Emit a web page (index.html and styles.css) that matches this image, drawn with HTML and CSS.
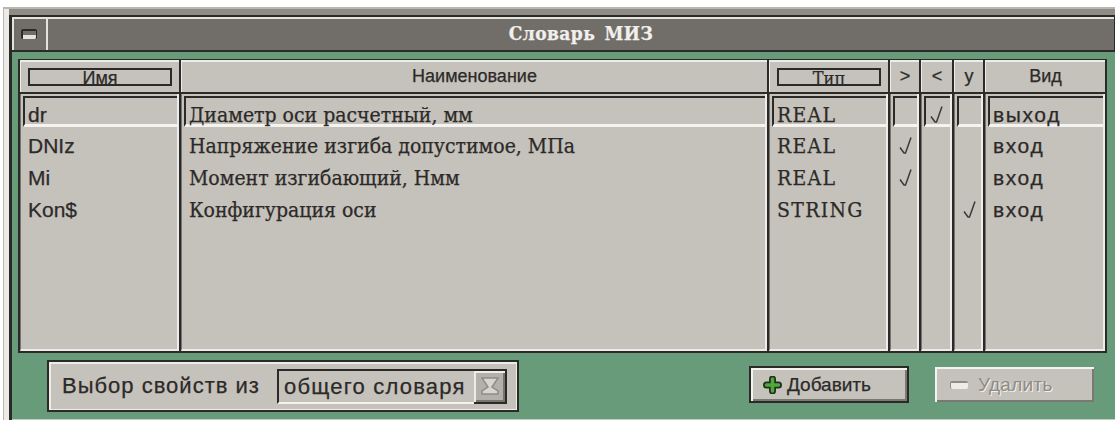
FILE: index.html
```html
<!DOCTYPE html>
<html lang="ru">
<head>
<meta charset="utf-8">
<title>Словарь МИЗ</title>
<link rel="stylesheet" href="styles.css">
</head>
<body>
<div class="window">
  <div class="frame">
    <header class="titlebar">
      <button class="sysmenu" aria-label="Меню"><span class="sysmenu-glyph"></span></button>
      <h1 class="title">Словарь МИЗ</h1>
    </header>
    <main class="client">
      <section class="table">
        <div class="head"><span class="sortbox"><span class="sort-label">Имя</span></span></div>
        <div class="head">Наименование</div>
        <div class="head"><span class="sortbox"><span class="sort-label serif">Тип</span></span></div>
        <div class="head">&gt;</div>
        <div class="head">&lt;</div>
        <div class="head">у</div>
        <div class="head">Вид</div>

        <div class="col sans">
          <div class="row current">dr</div>
          <div class="row">DNIz</div>
          <div class="row">Mi</div>
          <div class="row">Kon$</div>
        </div>
        <div class="col serif">
          <div class="row current">Диаметр оси расчетный, мм</div>
          <div class="row">Напряжение изгиба допустимое, МПа</div>
          <div class="row">Момент изгибающий, Нмм</div>
          <div class="row">Конфигурация оси</div>
        </div>
        <div class="col serif wide">
          <div class="row current">REAL</div>
          <div class="row">REAL</div>
          <div class="row">REAL</div>
          <div class="row">STRING</div>
        </div>
        <div class="col">
          <div class="row current"></div>
          <div class="row"><svg class="tick" viewBox="0 0 16 20"><path d="M1 11.5l4 5.5h1.5L12 1.5"/></svg></div>
          <div class="row"><svg class="tick" viewBox="0 0 16 20"><path d="M1 11.5l4 5.5h1.5L12 1.5"/></svg></div>
          <div class="row"></div>
        </div>
        <div class="col">
          <div class="row current"><svg class="tick" viewBox="0 0 16 20"><path d="M1 11.5l4 5.5h1.5L12 1.5"/></svg></div>
          <div class="row"></div>
          <div class="row"></div>
          <div class="row"></div>
        </div>
        <div class="col">
          <div class="row current"></div>
          <div class="row"></div>
          <div class="row"></div>
          <div class="row"><svg class="tick" viewBox="0 0 16 20"><path d="M1 11.5l4 5.5h1.5L12 1.5"/></svg></div>
        </div>
        <div class="col sans spaced">
          <div class="row current">выход</div>
          <div class="row">вход</div>
          <div class="row">вход</div>
          <div class="row">вход</div>
        </div>
      </section>

      <footer class="actions">
        <div class="picker">
          <span class="picker-label">Выбор свойств из</span>
          <div class="combo">
            <span class="combo-value">общего словаря</span>
            <span class="combo-arrow">
              <svg viewBox="0 0 22 22"><path class="combo-shape" d="M3 3h16l-6 9 6 4v3H3v-3l6-4z"/></svg>
            </span>
          </div>
        </div>
        <button class="btn add">
          <svg class="btn-icon" viewBox="0 0 18 18"><path class="plus-outline" d="M9 3v12M3 9h12"/><path class="plus-fill" d="M9 3v12M3 9h12"/></svg>Добавить
        </button>
        <button class="btn remove" disabled>
          <span class="minus"></span>Удалить
        </button>
      </footer>
    </main>
  </div>
</div>
</body>
</html>
```

FILE: styles.css
```css
* {
  box-sizing: border-box;
}

html,
body {
  margin: 0;
  height: 100%;
  background: #fff;
}

body {
  overflow: hidden;
  padding: 7px 0 1px 3px;
  color: #2c2a28;
  font-family: "Liberation Sans", sans-serif;
  -webkit-text-stroke: 0.25px currentColor;
}

.window {
  height: 100%;
  padding: 6px 0 0 5px;
  background: linear-gradient(#8f8c86, #8f8c86) 5px 0 / 100% 6px no-repeat, #ecebe6;
  border-top: 2px solid #b9b7b2;
  border-left: 1px solid #b9b7b2;
}

.frame {
  display: flex;
  flex-direction: column;
  height: 100%;
  border-top: 2px solid #2b2a28;
  border-left: 3px solid #2b2a28;
}

.titlebar {
  display: flex;
  flex: none;
  height: 35px;
  background: #716d69;
  border-bottom: 2px solid #2b2a28;
  border-right: 1px solid #2b2a28;
  box-shadow: inset 0 2px 0 #e4e2dd;
}

.sysmenu {
  flex: none;
  display: flex;
  align-items: center;
  justify-content: center;
  width: 36px;
  padding: 0;
  background: #716d69;
  border: 0;
  border-right: 2px solid #e4e2dd;
  box-shadow: inset 2px 2px 0 #e4e2dd;
}

.sysmenu-glyph {
  width: 16px;
  height: 10px;
  background: linear-gradient(#716d69 50%, #e4e2dd 50%);
  border: 2px solid #2b2a28;
  border-right-width: 1px;
  border-bottom: 0;
  border-radius: 2px;
}

.title {
  flex: 1;
  margin: 0;
  color: #f2f0ec;
  font: bold 19px/33px "DejaVu Serif Condensed", "DejaVu Serif", serif;
  letter-spacing: 0.4px;
  word-spacing: 3px;
  text-align: center;
}

.client {
  flex: 1;
  min-height: 0;
  padding: 7px 0 0 6px;
  background: #679b79;
  border-bottom: 1px solid #bcd2c3;
}

.table {
  display: grid;
  width: 1089px;
  grid-template-columns: 159px 586px 119px 29px 31px 29px 120px;
  grid-template-rows: 32px 257px;
  gap: 2px;
  padding: 1px 2px 2px;
  background: #2b2a28;
}

.head {
  display: flex;
  align-items: center;
  justify-content: center;
  padding-bottom: 1px;
  background: #c5c1bb;
  border-top: 2px solid #eeece8;
  border-left: 1px solid #eeece8;
  font-size: 18px;
}

.sortbox {
  display: flex;
  justify-content: center;
  align-items: flex-end;
  width: calc(100% - 14px);
  height: 18px;
  border: 2px solid #2b2a28;
  line-height: 17px;
}

.sort-label {
  margin-bottom: -3px;
}

.col {
  display: flex;
  flex-direction: column;
  padding: 2px 0 0 2px;
  background: #c5c1bb;
  border-right: 2px solid #eeece8;
  border-bottom: 2px solid #eeece8;
  border-left: 1px solid #77736e;
}

.sans {
  font-family: "Liberation Sans", sans-serif;
}

.serif {
  font-family: "DejaVu Serif Condensed", "DejaVu Serif", serif;
}

.wide {
  letter-spacing: 1.3px;
}

.spaced {
  letter-spacing: 1.6px;
}

.row {
  display: flex;
  align-items: center;
  flex: none;
  height: 32px;
  padding-left: 5px;
  font-size: 21px;
  white-space: nowrap;
}

.row.current {
  height: 31px;
  margin-bottom: 3px;
  padding: 7px 0 0 3px;
  border-top: 2px solid #2b2a28;
  border-left: 2px solid #2b2a28;
  border-bottom: 3px solid #f5f3f0;
}

.tick {
  flex: none;
  width: 16px;
  height: 20px;
  margin-left: 1px;
}

.tick path {
  fill: none;
  stroke: #3b3936;
  stroke-width: 1.5;
}

.actions {
  display: flex;
  align-items: flex-start;
  padding: 7px 0 0 29px;
}

.picker {
  display: flex;
  flex: none;
  align-items: center;
  width: 472px;
  height: 52px;
  margin-right: 230px;
  padding-left: 13px;
  background: #c5c1bb;
  border: 2px solid #2b2a28;
  box-shadow: inset 2px 2px 0 #eeece8, inset -1px -1px 0 #eeece8;
}

.picker-label {
  width: 215px;
  flex: none;
  font-size: 22px;
  letter-spacing: 1px;
  white-space: nowrap;
}

.combo {
  display: flex;
  flex: none;
  width: 230px;
  height: 35px;
  border-top: 2px solid #2b2a28;
  border-left: 2px solid #2b2a28;
  border-bottom: 2px solid #f5f3f0;
}

.combo-value {
  flex: 1;
  padding-left: 5px;
  font-size: 22px;
  line-height: 31px;
  letter-spacing: 1.2px;
  white-space: nowrap;
}

.combo-arrow {
  display: flex;
  flex: none;
  align-items: center;
  justify-content: center;
  width: 33px;
  margin-top: -2px;
  margin-bottom: -2px;
  background: #b3afa9;
  border: 2px solid #2b2a28;
  border-left: 0;
  box-shadow: inset 2px 2px 0 #eeece8, inset -2px -2px 0 #77736e;
}

.combo-arrow svg {
  width: 22px;
  height: 22px;
}

.combo-shape {
  fill: #d8d5d0;
  stroke: #8f8b85;
  stroke-width: 1.5;
}

.btn {
  display: flex;
  flex: none;
  align-items: center;
  background: #c5c1bb;
  font: 19px "Liberation Sans", sans-serif;
  color: #2c2a28;
}

.add {
  width: 160px;
  height: 37px;
  margin: 6px 26px 0 0;
  padding: 0 0 0 12px;
  border: 2px solid #2b2a28;
  box-shadow: inset 2px 2px 0 #f5f3f0, inset -2px -2px 0 #7b7772;
}

.btn-icon {
  flex: none;
  width: 19px;
  height: 18px;
  margin-right: 5px;
  fill: none;
  stroke-linecap: round;
}

.plus-outline {
  stroke: #23301f;
  stroke-width: 7;
}

.plus-fill {
  stroke: #4ea83a;
  stroke-width: 3.5;
}

.remove {
  width: 159px;
  height: 35px;
  margin-top: 7px;
  padding: 0 0 0 15px;
  color: #8f8b85;
  letter-spacing: 0.3px;
  border: 0;
  box-shadow: inset 2px 2px 0 #f5f3f0, inset -2px -2px 0 #7b7772;
  text-shadow: 1px 1px 0 #f3f1ed;
  -webkit-text-stroke: 0;
}

.minus {
  flex: none;
  width: 18px;
  height: 8px;
  margin-right: 10px;
  background: #eeece8;
  border-top: 2px solid #8f8b85;
  border-left: 1px solid #8f8b85;
  border-radius: 2px;
}
```
